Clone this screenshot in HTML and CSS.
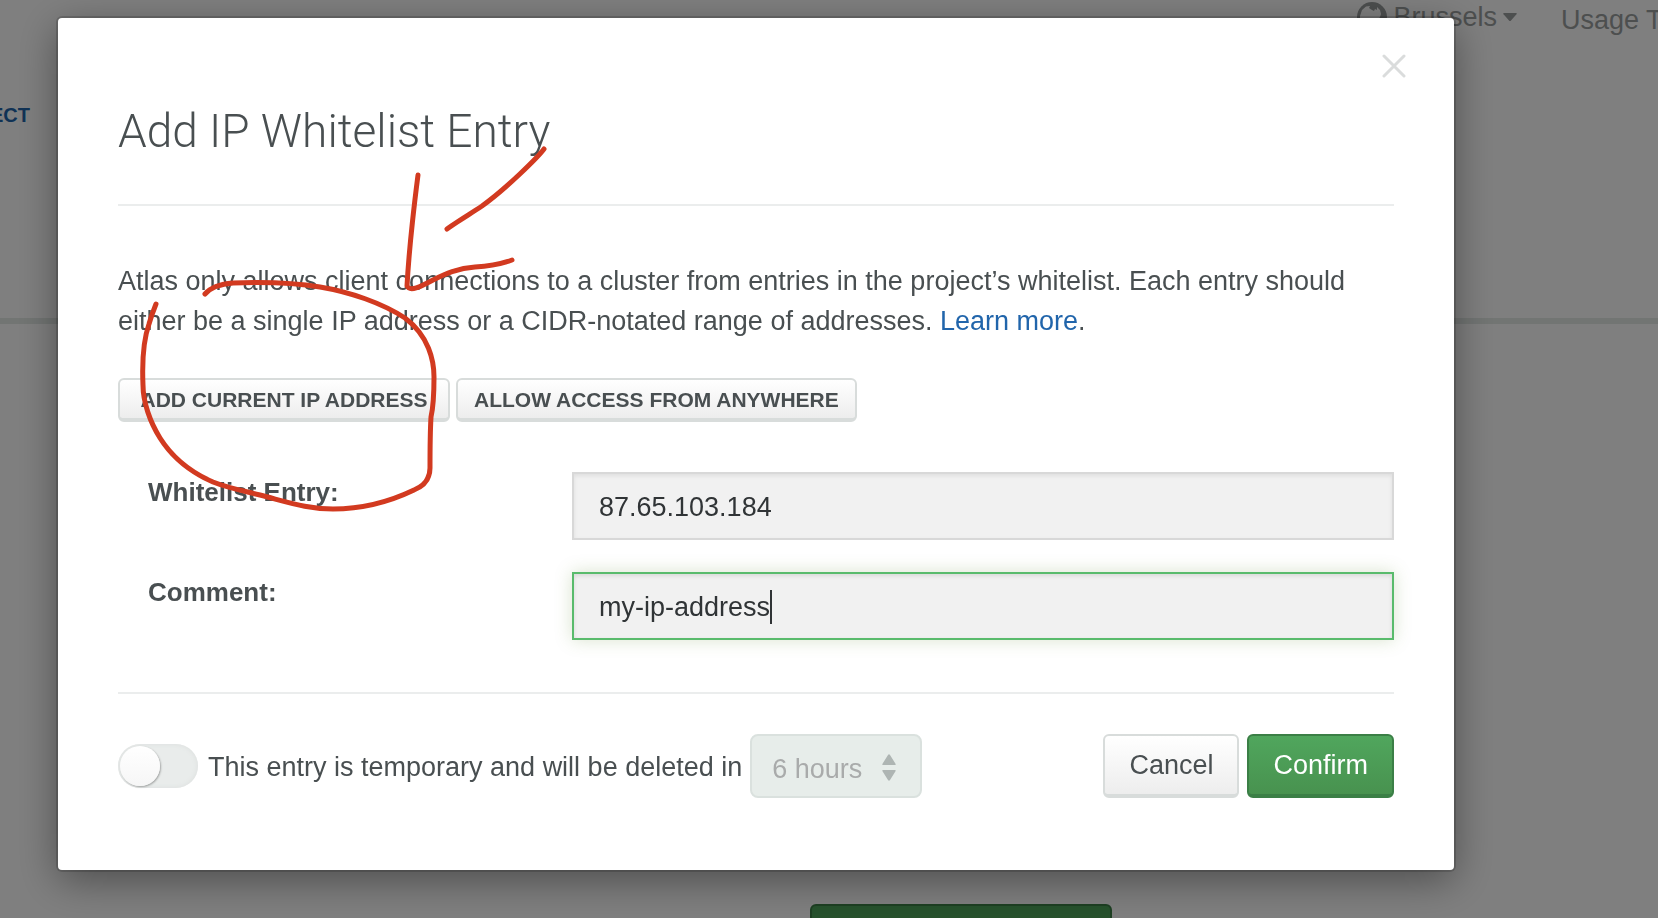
FILE: index.html
```html
<!DOCTYPE html>
<html lang="en">
<head>
<meta charset="utf-8">
<title>Add IP Whitelist Entry</title>
<link rel="stylesheet" href="styles.css">
</head>
<body>
<div class="page">
  <header class="page-header">
    <nav class="topbar">
      <a class="region" href="#">
        <svg class="globe" viewBox="0 0 30 30" aria-hidden="true"><circle cx="15" cy="15" r="15" fill="#9a9e9e"/><path d="M3 14L5 8L9 4.500L13 4L12 6L15 8L17 9L18 7L20 8L20 5L23 8L24 12L23 15L19 20L14 23L8 18L3 17Z" fill="#fff"/></svg>
        <span>Brussels</span>
        <svg class="caret-down" viewBox="0 0 14 8" aria-hidden="true"><path d="M1 0H13Q14.500 0 13.500 1.200L8 7.500Q7 8.500 6 7.500L.5 1.200Q-.5 0 1 0Z" fill="#9a9e9e"/></svg>
      </a>
      <a class="usage" href="#">Usage T</a>
    </nav>
    <a class="crumb" href="#">ECT</a>
  </header>
  <main class="page-body">
    <button class="page-action" type="button" aria-label="Add entry"></button>
  </main>
</div>

<div class="overlay">
  <form class="modal" role="dialog" aria-labelledby="title">
    <button class="close" type="button" aria-label="Close">
      <svg viewBox="0 0 24 24" aria-hidden="true"><path d="M2 2L22 22M22 2L2 22"/></svg>
    </button>
    <h1 class="title" id="title">Add IP Whitelist Entry</h1>
    <div class="content">
      <p class="intro">Atlas only allows client connections to a cluster from entries in the project’s whitelist. Each entry should either be a single IP address or a CIDR-notated range of addresses. <a href="#">Learn more</a>.</p>
      <div class="shortcuts">
        <button class="btn btn-small" type="button">ADD CURRENT IP ADDRESS</button>
        <button class="btn btn-small" type="button">ALLOW ACCESS FROM ANYWHERE</button>
      </div>
      <div class="fields">
        <div class="field">
          <label for="entry">Whitelist Entry:</label>
          <div class="control"><input id="entry" type="text" value="87.65.103.184"></div>
        </div>
        <div class="field">
          <label for="comment">Comment:</label>
          <div class="control"><input class="active" id="comment" type="text" value="my-ip-address"><span class="text-cursor"></span></div>
        </div>
      </div>
    </div>
    <footer class="footer">
      <input class="toggle" id="temporary" type="checkbox">
      <label class="toggle-label" for="temporary">This entry is temporary and will be deleted in</label>
      <div class="select-wrap">
        <select aria-label="Deleted in" disabled><option>6 hours</option></select>
        <svg class="arrows" viewBox="0 0 14 28" aria-hidden="true"><path d="M1 11Q-.3 11 .5 9.800L6 1Q7 -.5 8 1L13.500 9.800Q14.300 11 13 11ZM1 16Q-.3 16 .5 17.200L6 26Q7 27.500 8 26L13.500 17.200Q14.300 16 13 16Z" fill="#aeb5b3"/></svg>
      </div>
      <div class="actions">
        <button class="btn" type="button">Cancel</button>
        <button class="btn btn-primary" type="submit">Confirm</button>
      </div>
    </footer>
    <svg class="scribble" viewBox="58 18 600 520" aria-hidden="true">
      <path d="M544 149C538 157 507 188 482 206C470 214 458 221 447 229"/>
      <path d="M418 175C413 214 409 250 407 286C410 292 420 287 433 280C445 274 458 268 475 267C490 266 501 264 512 260"/>
      <path d="M205 294C211 287 220 284 233 283C260 282 290 282 320 287C350 292 382 303 405 318C429 336 434 361 434 377C434 393 434 404 431 417C430 434 430 453 430 468C430 479 424 486 414 490C389 502 360 509 333 509C308 509 291 503 260 495C244 491 228 488 213 482C190 472 172 457 160 438C150 422 143 402 143 385C142 362 143 341 149 324C151 317 154 309 156 304"/>
    </svg>
  </form>
</div>
</body>
</html>
```

FILE: styles.css
```css
* {
  box-sizing: border-box;
}

body {
  margin: 0;
  color: #494f51;
  font-family: "Liberation Sans", Arial, sans-serif;
  font-size: 27px;
  line-height: 40px;
}

button,
input,
select {
  margin: 0;
  font: inherit;
  color: inherit;
}

a {
  color: #2165ab;
  text-decoration: none;
}

.page {
  height: 100vh;
  overflow: hidden;
  background: #fff;
}

.page-header {
  height: 324px;
  border-bottom: 6px solid #e4eae7;
}

.topbar {
  display: flex;
  justify-content: flex-end;
  gap: 44px;
  height: 95px;
}

.topbar a {
  color: #9a9e9e;
}

.region {
  display: flex;
  align-items: center;
  gap: 6px;
  height: 34px;
}

.globe {
  width: 30px;
  height: 30px;
}

.caret-down {
  width: 14px;
  height: 8px;
}

.usage {
  width: 97px;
  white-space: nowrap;
}

.crumb {
  display: block;
  font-size: 20px;
  font-weight: bold;
  text-indent: -10px;
}

.page-body {
  display: flex;
  padding: 580px 0 0 810px;
}

.page-action {
  width: 302px;
  height: 64px;
  border: 2px solid #3b7f46;
  border-radius: 6px;
  background: #4da45a;
}

.overlay {
  position: fixed;
  inset: 0;
  padding: 18px 204px 48px 58px;
  background: rgba(0, 0, 0, 0.5);
}

.modal {
  position: relative;
  padding: 80px 60px 72px;
  border-radius: 4px;
  background: #fff;
  box-shadow: 0 0 0 2px rgba(0, 0, 0, 0.16), 0 10px 40px rgba(0, 0, 0, 0.4);
}

.close {
  position: absolute;
  top: 32px;
  right: 44px;
  padding: 4px;
  border: 0;
  background: none;
  line-height: 0;
}

.close svg {
  width: 24px;
  height: 24px;
  fill: none;
  stroke: #dadcdc;
  stroke-width: 3;
  stroke-linecap: round;
}

.title {
  margin: 0;
  padding-bottom: 40px;
  border-bottom: 2px solid #ebeded;
  font-family: Roboto, "Liberation Sans", sans-serif;
  font-size: 46px;
  font-weight: 300;
  line-height: 66px;
}

.content {
  padding: 55px 0 52px;
}

.intro {
  margin: 0;
}

.shortcuts {
  display: flex;
  gap: 6px;
  margin-top: 37px;
}

.btn {
  height: 64px;
  padding: 0 24px;
  border: 2px solid #d8dcdb;
  border-bottom-width: 4px;
  border-radius: 6px;
  background: linear-gradient(#fff, #ededed);
  line-height: 32px;
  white-space: nowrap;
}

.btn-small {
  min-width: 332px;
  height: 44px;
  padding: 2px 16px 0;
  font-size: 21px;
  font-weight: bold;
}

.btn-primary {
  border-color: #3b7f46;
  background: linear-gradient(#50a65d, #48924f);
  color: #fff;
}

.fields {
  display: grid;
  gap: 32px;
  padding-left: 30px;
  margin-top: 50px;
}

.field {
  display: grid;
  grid-template-columns: 424px 1fr;
}

.field label {
  font-size: 26px;
  font-weight: bold;
}

.control {
  position: relative;
}

.control input {
  display: block;
  width: 100%;
  height: 68px;
  padding: 2px 25px 0;
  border: 2px solid #d8d8d8;
  border-radius: 0;
  outline: 0;
  background: #f1f1f1;
  box-shadow: inset 0 2px 4px rgba(0, 0, 0, 0.08);
  color: #303436;
}

.control .active {
  border-color: #59bb6c;
  box-shadow: inset 0 2px 4px rgba(0, 0, 0, 0.1), 0 0 16px rgba(105, 145, 60, 0.25);
}

.text-cursor {
  position: absolute;
  top: 18px;
  left: 198px;
  width: 2px;
  height: 34px;
  background: #303436;
}

.footer {
  display: flex;
  align-items: center;
  padding-top: 40px;
  border-top: 2px solid #ebeded;
}

.toggle {
  display: flex;
  flex: none;
  width: 80px;
  height: 44px;
  padding: 2px;
  border-radius: 22px;
  appearance: none;
  background: #e9eceb;
  box-shadow: inset 0 0 4px 1px #dfe2e1;
}

.toggle::before {
  content: "";
  width: 40px;
  height: 40px;
  border-radius: 50%;
  background: linear-gradient(#fff, #f6f6f6);
  box-shadow: 1px 1px 2px rgba(0, 0, 0, 0.3);
}

.toggle-label {
  padding-top: 2px;
  margin-left: 10px;
}

.select-wrap {
  position: relative;
  margin-left: 8px;
}

.select-wrap select {
  display: block;
  width: 172px;
  height: 64px;
  padding: 6px 20px 0;
  border: 2px solid #dae1de;
  border-radius: 8px;
  appearance: none;
  background: #e7edea;
  color: #a9abab;
  opacity: 1;
}

.arrows {
  position: absolute;
  top: 20px;
  right: 26px;
  width: 14px;
  height: 28px;
  pointer-events: none;
}

.actions {
  display: flex;
  gap: 8px;
  margin-left: auto;
}

.scribble {
  position: absolute;
  top: 0;
  left: 0;
  width: 600px;
  height: 520px;
  fill: none;
  stroke: #d23a20;
  stroke-width: 5;
  stroke-linecap: round;
  stroke-linejoin: round;
  pointer-events: none;
}
```
